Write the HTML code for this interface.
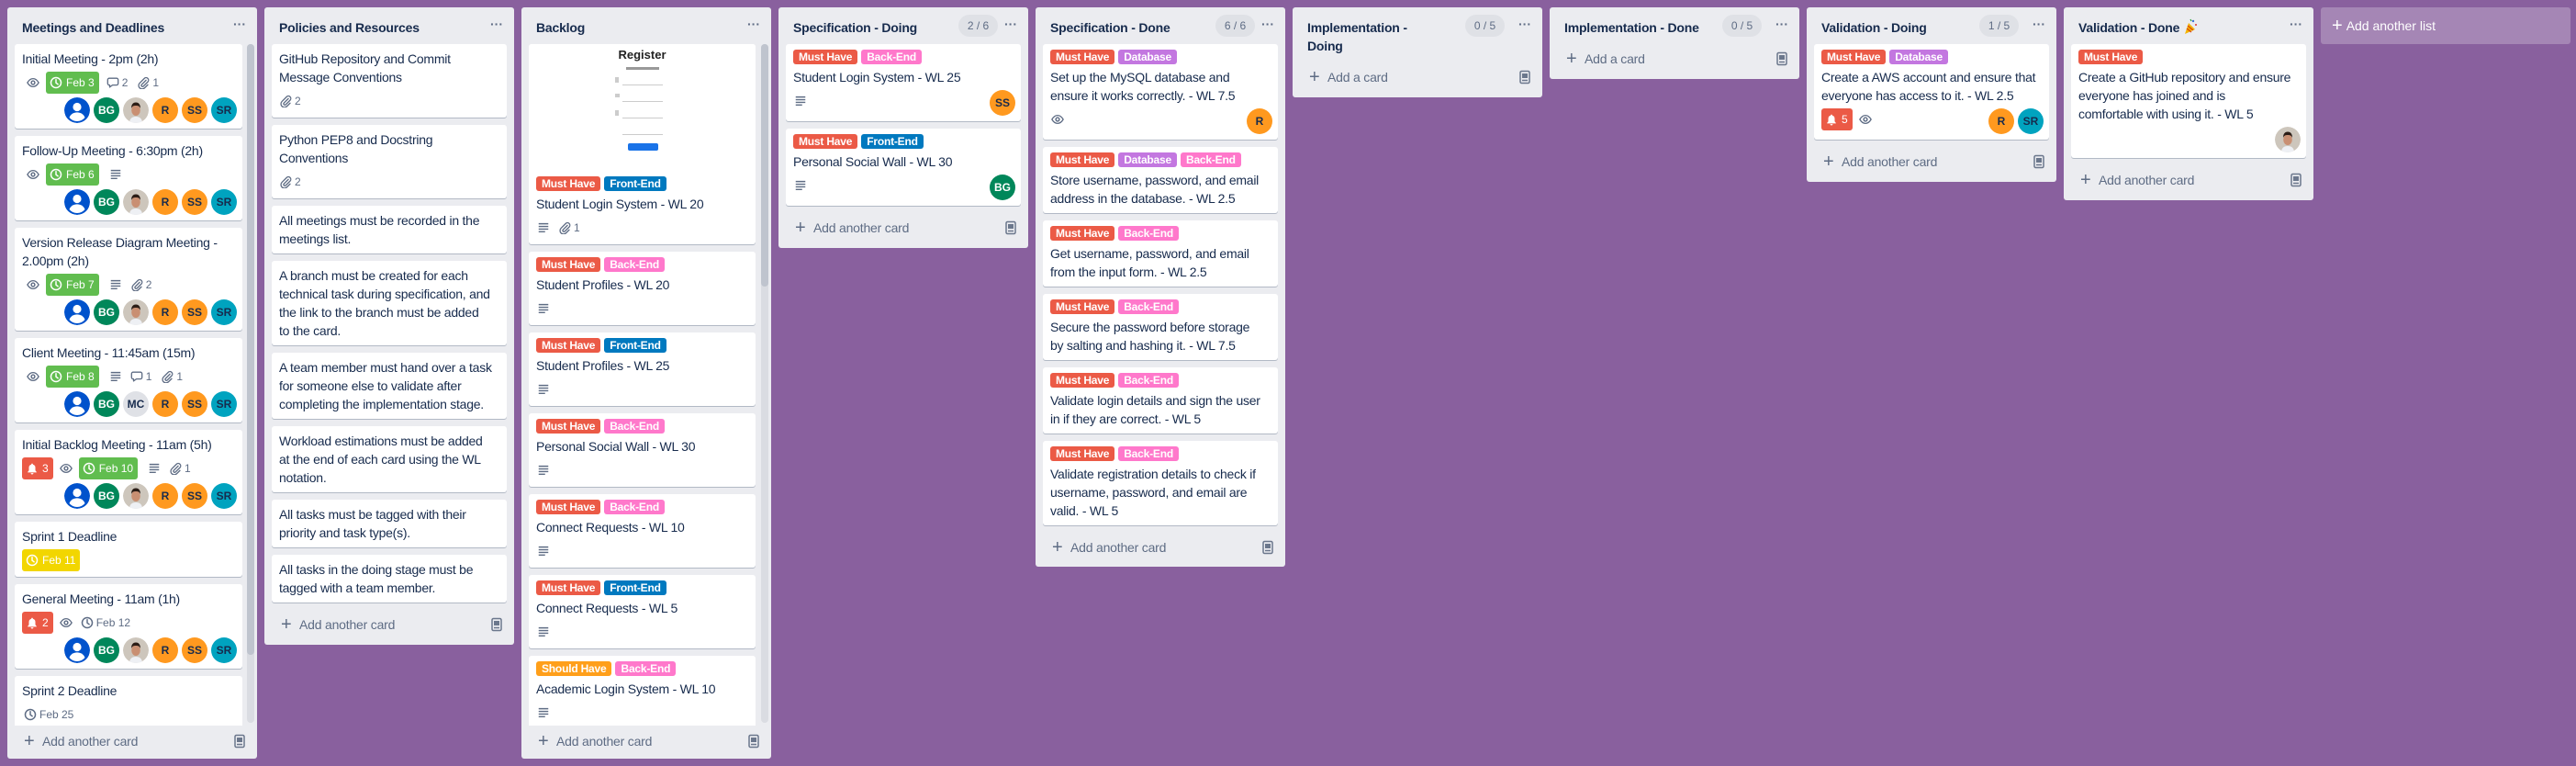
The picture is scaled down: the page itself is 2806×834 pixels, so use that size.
<!DOCTYPE html>
<html><head><meta charset="utf-8"><style>
*{box-sizing:border-box}
body{margin:0;width:2806px;height:834px;background:#89609e;font-family:"Liberation Sans",sans-serif;position:relative;overflow:hidden;color:#172b4d}
.col{position:absolute;top:8px;width:272px;background:#ebecf0;border-radius:3px}
.h{position:absolute;left:16px;top:12px;font-size:14px;line-height:20px;font-weight:bold;color:#172b4d;white-space:nowrap;letter-spacing:-0.2px}
.dots{position:absolute;right:12px;top:10px;font-size:14px;color:#5e6c84;letter-spacing:0px;font-weight:bold}
.pill{position:absolute;top:8px;height:24px;width:43px;border-radius:12px;background:#dfe1e6;color:#5e6c84;font-size:12px;line-height:24px;text-align:center}
.clip{position:absolute;left:0;top:40px;width:272px;height:742px;overflow:hidden}
.c{position:absolute;left:8px;width:256px;background:#fff;border-radius:3px;box-shadow:0 1px 0 rgba(9,30,66,.25);padding:6px 8px 0;overflow:hidden}
.lbs{height:16px;margin-bottom:4px;white-space:nowrap;font-size:0}
.lb{display:inline-block;height:16px;line-height:16px;font-size:12px;font-weight:bold;color:#fff;padding:0 6px;border-radius:3px;margin-right:4px;vertical-align:top;letter-spacing:-0.2px}
.red{background:#eb5a46}.pink{background:#ff78cb}.purp{background:#c377e0}.blue{background:#0079bf}.orng{background:#ff9f1a}
.t{font-size:14px;line-height:20px;color:#172b4d;white-space:nowrap;letter-spacing:-0.25px}
.row{height:24px;margin-top:4px;display:flex;align-items:center;color:#5e6c84;font-size:12px;white-space:nowrap}
.ic{width:24px;height:24px;display:inline-flex;align-items:center;justify-content:center;margin-right:2px}
.ic svg{width:14px;height:14px}
.ict{display:inline-flex;align-items:center;margin-right:8px;margin-left:2px}
.ict svg{width:14px;height:14px;margin-right:3px}
.bd{display:inline-flex;align-items:center;height:24px;padding:0 5px 0 4px;border-radius:3px;color:#fff;font-size:12px;margin-right:6px}
.bd svg{width:14px;height:14px;margin-right:4px}
.g{background:#61bd4f}.y{background:#f2d600}.r{background:#eb5a46}
.avs{position:absolute;right:6px;bottom:6px;display:flex}
.av{width:28px;height:28px;border-radius:50%;margin-left:4px;font-size:12px;font-weight:bold;line-height:28px;text-align:center;color:#172b4d;overflow:hidden}
.av svg{width:28px;height:28px;display:block}
.bg{background:#00875a;color:#fff}.ro{background:#ff991f}.ss{background:#ff991f}.sr{background:#00a3bf}.mc{background:#dfe1e6}
.add{position:absolute;left:18px;height:24px;width:244px;color:#5e6c84;font-size:14px;line-height:24px;letter-spacing:-0.2px}
.add .pl{display:inline-block;width:16px;font-size:20px;font-weight:normal;vertical-align:top;margin-right:4px}
.add svg{position:absolute;right:2px;top:4px;width:14px;height:16px}
.sb{position:absolute;left:261px;top:40px;width:8px;height:739px;background:#dadce2;border-radius:4px}
.sb i{position:absolute;left:0;top:0;width:8px;border-radius:4px;background:#bfc4ce}
</style></head><body>
<svg width="0" height="0" style="position:absolute">
<defs>
<symbol id="eye" viewBox="0 0 16 16"><path d="M1 8c2-3.4 4.4-5 7-5s5 1.6 7 5c-2 3.4-4.4 5-7 5S3 11.4 1 8z" fill="none" stroke="currentColor" stroke-width="1.5"/><circle cx="8" cy="8" r="2.2" fill="none" stroke="currentColor" stroke-width="1.6"/></symbol>
<symbol id="clk" viewBox="0 0 16 16"><circle cx="8" cy="8" r="6.3" fill="none" stroke="currentColor" stroke-width="1.7"/><path d="M8 4.3V8.2l2.4 1.8" fill="none" stroke="currentColor" stroke-width="1.7" stroke-linecap="round"/></symbol>
<symbol id="cmt" viewBox="0 0 16 16"><path d="M3.5 2.5h9a2 2 0 0 1 2 2v4.5a2 2 0 0 1-2 2H7.5L4 13.6V11H3.5a2 2 0 0 1-2-2V4.5a2 2 0 0 1 2-2z" fill="none" stroke="currentColor" stroke-width="1.5" stroke-linejoin="round"/></symbol>
<symbol id="clp" viewBox="0 0 16 16"><path d="M11.5 5L6 10.5a1.5 1.5 0 0 0 2.1 2.1l5.6-5.6a3 3 0 0 0-4.3-4.3L3.6 8.5a4.3 4.3 0 0 0 6.1 6.1l4-4" fill="none" stroke="currentColor" stroke-width="1.5" stroke-linecap="round"/></symbol>
<symbol id="dsc" viewBox="0 0 16 16"><path d="M2 3h12M2 6.3h12M2 9.6h12M2 12.9h8" stroke="currentColor" stroke-width="1.6"/></symbol>
<symbol id="bel" viewBox="0 0 16 16"><path d="M8 1.8a1 1 0 0 1 1 1v.4a4 4 0 0 1 3 3.9v3.4l1.5 1.9v.6h-11v-.6L4 10.5V7.1a4 4 0 0 1 3-3.9v-.4a1 1 0 0 1 1-1zM6.4 13.8h3.2a1.6 1.6 0 0 1-3.2 0z" fill="currentColor"/></symbol>
<symbol id="tpl" viewBox="0 0 14 16"><rect x="2" y="1.5" width="10" height="13" rx="1.5" fill="none" stroke="#6b778c" stroke-width="1.5"/><rect x="4" y="4" width="6" height="5" fill="#6b778c"/><path d="M4 11.5h6" stroke="#6b778c" stroke-width="1.5"/></symbol>
<symbol id="usr" viewBox="0 0 28 28"><circle cx="14" cy="14" r="14" fill="#0052cc"/><circle cx="14" cy="10.5" r="4.6" fill="#fff"/><path d="M5.5 22c1.5-4 5-5.6 8.5-5.6s7 1.6 8.5 5.6a11 11 0 0 1-17 0z" fill="#fff"/></symbol>
<symbol id="pho" viewBox="0 0 28 28"><circle cx="14" cy="14" r="14" fill="#cdc6bc"/><path d="M7 28c0-5 3-7 7-7s7 2 7 7z" fill="#eef0f4"/><ellipse cx="14" cy="14" rx="4.8" ry="6" fill="#c98f72"/><path d="M9 12c0-4.5 2-6.5 5-6.5s5 2 5 6.5c-1-2.5-2.5-3-5-3s-4 .5-5 3z" fill="#2b1d16"/></symbol>
</defs></svg>

<div class="col" style="left:8px;height:818px">
<div class="h">Meetings and Deadlines</div><div class="dots">···</div>
<div class="clip">
<div class="c" style="top:0;height:92px;width:248px"><div class="t">Initial Meeting - 2pm (2h)</div>
<div class="row"><span class="ic"><svg><use href="#eye"/></svg></span><span class="bd g"><svg><use href="#clk"/></svg>Feb 3</span><span class="ict"><svg><use href="#cmt"/></svg>2</span><span class="ict"><svg><use href="#clp"/></svg>1</span></div>
<div class="avs"><div class="av"><svg><use href="#usr"/></svg></div><div class="av bg">BG</div><div class="av"><svg><use href="#pho"/></svg></div><div class="av ro">R</div><div class="av ss">SS</div><div class="av sr">SR</div></div></div>
<div class="c" style="top:100px;height:92px;width:248px"><div class="t">Follow-Up Meeting - 6:30pm (2h)</div>
<div class="row"><span class="ic"><svg><use href="#eye"/></svg></span><span class="bd g"><svg><use href="#clk"/></svg>Feb 6</span><span class="ic"><svg><use href="#dsc"/></svg></span></div>
<div class="avs"><div class="av"><svg><use href="#usr"/></svg></div><div class="av bg">BG</div><div class="av"><svg><use href="#pho"/></svg></div><div class="av ro">R</div><div class="av ss">SS</div><div class="av sr">SR</div></div></div>
<div class="c" style="top:200px;height:112px;width:248px"><div class="t">Version Release Diagram Meeting -<br>2.00pm (2h)</div>
<div class="row"><span class="ic"><svg><use href="#eye"/></svg></span><span class="bd g"><svg><use href="#clk"/></svg>Feb 7</span><span class="ic"><svg><use href="#dsc"/></svg></span><span class="ict"><svg><use href="#clp"/></svg>2</span></div>
<div class="avs"><div class="av"><svg><use href="#usr"/></svg></div><div class="av bg">BG</div><div class="av"><svg><use href="#pho"/></svg></div><div class="av ro">R</div><div class="av ss">SS</div><div class="av sr">SR</div></div></div>
<div class="c" style="top:320px;height:92px;width:248px"><div class="t">Client Meeting - 11:45am (15m)</div>
<div class="row"><span class="ic"><svg><use href="#eye"/></svg></span><span class="bd g"><svg><use href="#clk"/></svg>Feb 8</span><span class="ic"><svg><use href="#dsc"/></svg></span><span class="ict"><svg><use href="#cmt"/></svg>1</span><span class="ict"><svg><use href="#clp"/></svg>1</span></div>
<div class="avs"><div class="av"><svg><use href="#usr"/></svg></div><div class="av bg">BG</div><div class="av mc">MC</div><div class="av ro">R</div><div class="av ss">SS</div><div class="av sr">SR</div></div></div>
<div class="c" style="top:420px;height:92px;width:248px"><div class="t">Initial Backlog Meeting - 11am (5h)</div>
<div class="row"><span class="bd r" style="margin-right:2px"><svg><use href="#bel"/></svg>3</span><span class="ic"><svg><use href="#eye"/></svg></span><span class="bd g"><svg><use href="#clk"/></svg>Feb 10</span><span class="ic"><svg><use href="#dsc"/></svg></span><span class="ict"><svg><use href="#clp"/></svg>1</span></div>
<div class="avs"><div class="av"><svg><use href="#usr"/></svg></div><div class="av bg">BG</div><div class="av"><svg><use href="#pho"/></svg></div><div class="av ro">R</div><div class="av ss">SS</div><div class="av sr">SR</div></div></div>
<div class="c" style="top:520px;height:60px;width:248px"><div class="t">Sprint 1 Deadline</div>
<div class="row"><span class="bd y"><svg><use href="#clk"/></svg>Feb 11</span></div></div>
<div class="c" style="top:588px;height:92px;width:248px"><div class="t">General Meeting - 11am (1h)</div>
<div class="row"><span class="bd r" style="margin-right:2px"><svg><use href="#bel"/></svg>2</span><span class="ic"><svg><use href="#eye"/></svg></span><span class="ict"><svg><use href="#clk"/></svg>Feb 12</span></div>
<div class="avs"><div class="av"><svg><use href="#usr"/></svg></div><div class="av bg">BG</div><div class="av"><svg><use href="#pho"/></svg></div><div class="av ro">R</div><div class="av ss">SS</div><div class="av sr">SR</div></div></div>
<div class="c" style="top:688px;height:100px;width:248px"><div class="t">Sprint 2 Deadline</div>
<div class="row"><span class="ict"><svg><use href="#clk"/></svg>Feb 25</span></div></div>
</div>
<div class="sb"><i style="height:665px"></i></div>
<div class="add" style="top:787px"><span class="pl">+</span>Add another card<svg><use href="#tpl"/></svg></div>
</div>

<div class="col" style="left:288px;height:694px">
<div class="h">Policies and Resources</div><div class="dots">···</div>
<div class="c" style="top:40px;height:80px"><div class="t">GitHub Repository and Commit<br>Message Conventions</div><div class="row"><span class="ict" style="margin-left:0"><svg><use href="#clp"/></svg>2</span></div></div>
<div class="c" style="top:128px;height:80px"><div class="t">Python PEP8 and Docstring<br>Conventions</div><div class="row"><span class="ict" style="margin-left:0"><svg><use href="#clp"/></svg>2</span></div></div>
<div class="c" style="top:216px;height:52px"><div class="t">All meetings must be recorded in the<br>meetings list.</div></div>
<div class="c" style="top:276px;height:92px"><div class="t">A branch must be created for each<br>technical task during specification, and<br>the link to the branch must be added<br>to the card.</div></div>
<div class="c" style="top:376px;height:72px"><div class="t">A team member must hand over a task<br>for someone else to validate after<br>completing the implementation stage.</div></div>
<div class="c" style="top:456px;height:72px"><div class="t">Workload estimations must be added<br>at the end of each card using the WL<br>notation.</div></div>
<div class="c" style="top:536px;height:52px"><div class="t">All tasks must be tagged with their<br>priority and task type(s).</div></div>
<div class="c" style="top:596px;height:52px"><div class="t">All tasks in the doing stage must be<br>tagged with a team member.</div></div>
<div class="add" style="top:660px"><span class="pl">+</span>Add another card<svg><use href="#tpl"/></svg></div>
</div>

<div class="col" style="left:568px;height:818px">
<div class="h">Backlog</div><div class="dots">···</div>
<div class="clip">
<div class="c" style="top:0;height:218px;width:247px;padding:0">
<div style="position:relative;height:137px;background:#fff">
<div style="position:absolute;left:0;width:247px;top:4px;text-align:center;font-size:13px;font-weight:bold;color:#222">Register</div>
<div style="position:absolute;left:106px;top:25px;width:36px;height:3px;background:#999"></div>
<div style="position:absolute;left:94px;top:36px;width:4px;height:6px;background:#ccc"></div><div style="position:absolute;left:102px;top:44px;width:44px;height:1px;background:#ccc"></div>
<div style="position:absolute;left:94px;top:54px;width:5px;height:4px;background:#ccc"></div><div style="position:absolute;left:102px;top:62px;width:44px;height:1px;background:#ccc"></div>
<div style="position:absolute;left:94px;top:72px;width:4px;height:6px;background:#ccc"></div><div style="position:absolute;left:102px;top:80px;width:44px;height:1px;background:#ccc"></div>
<div style="position:absolute;left:102px;top:98px;width:44px;height:1px;background:#ccc"></div>
<div style="position:absolute;left:108px;top:108px;width:33px;height:8px;border-radius:2px;background:#1a73e8"></div>
</div>
<div style="padding:7px 8px 0"><div class="lbs"><span class="lb red">Must Have</span><span class="lb blue">Front-End</span></div><div class="t">Student Login System - WL 20</div>
<div class="row"><span class="ic" style="margin-left:-4px"><svg><use href="#dsc"/></svg></span><span class="ict"><svg><use href="#clp"/></svg>1</span></div></div></div>
<div class="c" style="top:226px;height:80px;width:247px"><div class="lbs"><span class="lb red">Must Have</span><span class="lb pink">Back-End</span></div><div class="t">Student Profiles - WL 20</div><div class="row"><span class="ic" style="margin-left:-4px"><svg><use href="#dsc"/></svg></span></div></div>
<div class="c" style="top:314px;height:80px;width:247px"><div class="lbs"><span class="lb red">Must Have</span><span class="lb blue">Front-End</span></div><div class="t">Student Profiles - WL 25</div><div class="row"><span class="ic" style="margin-left:-4px"><svg><use href="#dsc"/></svg></span></div></div>
<div class="c" style="top:402px;height:80px;width:247px"><div class="lbs"><span class="lb red">Must Have</span><span class="lb pink">Back-End</span></div><div class="t">Personal Social Wall - WL 30</div><div class="row"><span class="ic" style="margin-left:-4px"><svg><use href="#dsc"/></svg></span></div></div>
<div class="c" style="top:490px;height:80px;width:247px"><div class="lbs"><span class="lb red">Must Have</span><span class="lb pink">Back-End</span></div><div class="t">Connect Requests - WL 10</div><div class="row"><span class="ic" style="margin-left:-4px"><svg><use href="#dsc"/></svg></span></div></div>
<div class="c" style="top:578px;height:80px;width:247px"><div class="lbs"><span class="lb red">Must Have</span><span class="lb blue">Front-End</span></div><div class="t">Connect Requests - WL 5</div><div class="row"><span class="ic" style="margin-left:-4px"><svg><use href="#dsc"/></svg></span></div></div>
<div class="c" style="top:666px;height:100px;width:247px"><div class="lbs"><span class="lb orng">Should Have</span><span class="lb pink">Back-End</span></div><div class="t">Academic Login System - WL 10</div><div class="row"><span class="ic" style="margin-left:-4px"><svg><use href="#dsc"/></svg></span></div></div>
</div>
<div class="sb"><i style="height:264px"></i></div>
<div class="add" style="top:787px"><span class="pl">+</span>Add another card<svg><use href="#tpl"/></svg></div>
</div>

<div class="col" style="left:848px;height:262px">
<div class="h">Specification - Doing</div><div class="pill" style="left:196px">2 / 6</div><div class="dots">···</div>
<div class="c" style="top:40px;height:84px"><div class="lbs"><span class="lb red">Must Have</span><span class="lb pink">Back-End</span></div><div class="t">Student Login System - WL 25</div><div class="row"><span class="ic" style="margin-left:-4px"><svg><use href="#dsc"/></svg></span></div><div class="avs"><div class="av ss">SS</div></div></div>
<div class="c" style="top:132px;height:84px"><div class="lbs"><span class="lb red">Must Have</span><span class="lb blue">Front-End</span></div><div class="t">Personal Social Wall - WL 30</div><div class="row"><span class="ic" style="margin-left:-4px"><svg><use href="#dsc"/></svg></span></div><div class="avs"><div class="av bg">BG</div></div></div>
<div class="add" style="top:228px"><span class="pl">+</span>Add another card<svg><use href="#tpl"/></svg></div>
</div>

<div class="col" style="left:1128px;height:609px">
<div class="h">Specification - Done</div><div class="pill" style="left:196px">6 / 6</div><div class="dots">···</div>
<div class="c" style="top:40px;height:104px"><div class="lbs"><span class="lb red">Must Have</span><span class="lb purp">Database</span></div><div class="t">Set up the MySQL database and<br>ensure it works correctly. - WL 7.5</div><div class="row"><span class="ic" style="margin-left:-4px"><svg><use href="#eye"/></svg></span></div><div class="avs"><div class="av ro">R</div></div></div>
<div class="c" style="top:152px;height:72px"><div class="lbs"><span class="lb red">Must Have</span><span class="lb purp">Database</span><span class="lb pink">Back-End</span></div><div class="t">Store username, password, and email<br>address in the database. - WL 2.5</div></div>
<div class="c" style="top:232px;height:72px"><div class="lbs"><span class="lb red">Must Have</span><span class="lb pink">Back-End</span></div><div class="t">Get username, password, and email<br>from the input form. - WL 2.5</div></div>
<div class="c" style="top:312px;height:72px"><div class="lbs"><span class="lb red">Must Have</span><span class="lb pink">Back-End</span></div><div class="t">Secure the password before storage<br>by salting and hashing it. - WL 7.5</div></div>
<div class="c" style="top:392px;height:72px"><div class="lbs"><span class="lb red">Must Have</span><span class="lb pink">Back-End</span></div><div class="t">Validate login details and sign the user<br>in if they are correct. - WL 5</div></div>
<div class="c" style="top:472px;height:92px"><div class="lbs"><span class="lb red">Must Have</span><span class="lb pink">Back-End</span></div><div class="t">Validate registration details to check if<br>username, password, and email are<br>valid. - WL 5</div></div>
<div class="add" style="top:576px"><span class="pl">+</span>Add another card<svg><use href="#tpl"/></svg></div>
</div>

<div class="col" style="left:1408px;height:98px">
<div class="h">Implementation -<br>Doing</div><div class="pill" style="left:188px">0 / 5</div><div class="dots">···</div>
<div class="add" style="top:64px"><span class="pl">+</span>Add a card<svg><use href="#tpl"/></svg></div>
</div>

<div class="col" style="left:1688px;height:78px">
<div class="h">Implementation - Done</div><div class="pill" style="left:188px">0 / 5</div><div class="dots">···</div>
<div class="add" style="top:44px"><span class="pl">+</span>Add a card<svg><use href="#tpl"/></svg></div>
</div>

<div class="col" style="left:1968px;height:190px">
<div class="h">Validation - Doing</div><div class="pill" style="left:188px">1 / 5</div><div class="dots">···</div>
<div class="c" style="top:40px;height:104px"><div class="lbs"><span class="lb red">Must Have</span><span class="lb purp">Database</span></div><div class="t">Create a AWS account and ensure that<br>everyone has access to it. - WL 2.5</div><div class="row"><span class="bd r" style="margin-right:2px"><svg><use href="#bel"/></svg>5</span><span class="ic"><svg><use href="#eye"/></svg></span></div><div class="avs"><div class="av ro">R</div><div class="av sr">SR</div></div></div>
<div class="add" style="top:156px"><span class="pl">+</span>Add another card<svg><use href="#tpl"/></svg></div>
</div>

<div class="col" style="left:2248px;height:210px">
<div class="h">Validation - Done <svg width="16" height="18" viewBox="0 0 16 18" style="vertical-align:-3px"><path d="M2 17L6 5l7 7z" fill="#f4b400"/><path d="M4 11l5 4M5 8l6 5" stroke="#d9480f" stroke-width="1.3"/><circle cx="11" cy="3" r="1.2" fill="#3b6fd6"/><circle cx="14" cy="7" r="1" fill="#d33"/><path d="M8 1l1 2" stroke="#2a9d3a" stroke-width="1.2"/></svg></div><div class="dots">···</div>
<div class="c" style="top:40px;height:124px"><div class="lbs"><span class="lb red">Must Have</span></div><div class="t">Create a GitHub repository and ensure<br>everyone has joined and is<br>comfortable with using it. - WL 5</div><div class="avs"><div class="av"><svg><use href="#pho"/></svg></div></div></div>
<div class="add" style="top:176px"><span class="pl">+</span>Add another card<svg><use href="#tpl"/></svg></div>
</div>

<div style="position:absolute;left:2528px;top:8px;width:272px;height:40px;border-radius:3px;background:rgba(255,255,255,.24);color:#fff;font-size:14px;line-height:40px;padding-left:12px"><span style="font-size:20px;vertical-align:top;margin-right:4px">+</span>Add another list</div>
</body></html>
